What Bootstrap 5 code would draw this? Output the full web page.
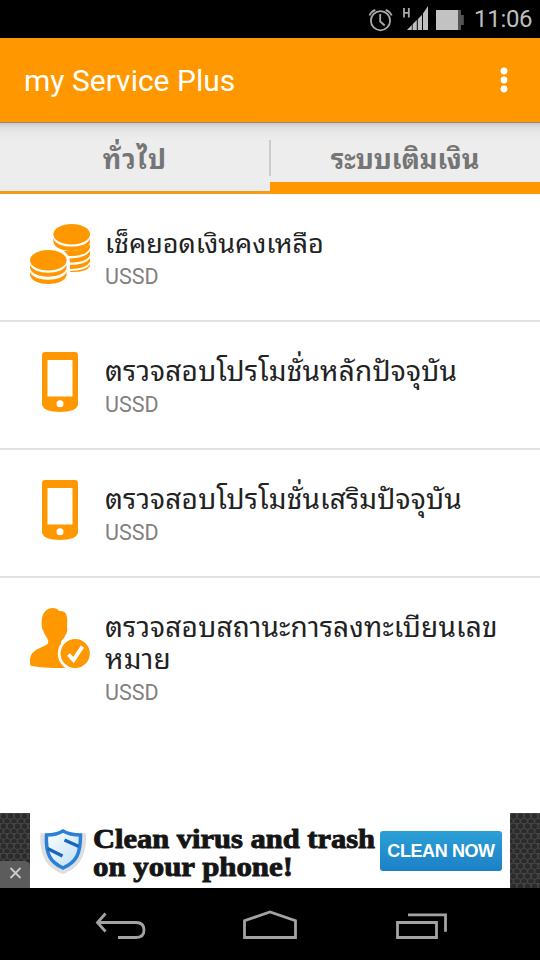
<!DOCTYPE html>
<html lang="th">
<head>
<meta charset="utf-8">
<meta name="viewport" content="width=device-width, initial-scale=1">
<title>my Service Plus</title>
<link href="https://cdn.jsdelivr.net/npm/bootstrap@5.3.0/dist/css/bootstrap.min.css" rel="stylesheet">
<style>
body{font-family:Roboto,"Droid Sans Thai","Noto Sans Thai Looped","Noto Looped Thai",Loma,Waree,Garuda,"Noto Sans Thai","Noto Sans",sans-serif;color:#222}
svg{display:block;flex:none}
.screen{width:540px;height:960px;background:#fff;overflow:hidden}
.status{height:38px;background:#000;color:#bebebe}
.clock{font-size:24px;line-height:39px;width:58px;white-space:nowrap;letter-spacing:-.3px}
.appbar{height:85px;background:#ff9800;border-bottom:1px solid #a08468;padding:0 0 0 24px}
.apptitle{font-size:30px;line-height:85px}
.tabs{height:71px;background:linear-gradient(#c9c9cb 0,#dcdedc 4px,#e6e8e6 9px,#ededed 17px)}
.tabs button{border:0;background:none;border-radius:0;color:#757575;font-weight:700;font-size:27px;line-height:36px;padding:19px 0 0;white-space:nowrap;display:flex;justify-content:center;align-items:flex-start}
.tab-off{border-bottom:3px solid #f59b1c!important}
.tab-on{border-bottom:12px solid #ff9800!important}
.tab-off span{letter-spacing:1.3px}
.tab-on span{letter-spacing:0}
.sep{width:2px;height:36px;background:#ccc;margin:17px -1px 0}
.entry{height:128px;padding:30px 30px 0;border-bottom:2px solid #e2e2e2;gap:15px}
.entry:last-child{height:235px;border:0}
.ttl{font-size:28px;line-height:32px;margin-top:4px;white-space:nowrap;color:#222;letter-spacing:.18px}
.ttl.first{font-size:27px;letter-spacing:0}
.sub{font-size:21.5px;line-height:26px;color:#808080;margin-top:4px}
.ad{height:75px;background:#303030}
.side{width:30px;height:75px}
.adbox{background:#fff;width:480px;padding-left:10px}
.adtext{width:287px;font-family:"Liberation Serif",serif}
.cta{width:122px;height:40px;background:linear-gradient(#2ba0d6,#1c80c6);border-radius:3px;color:#fff;font:700 18px/40px "Liberation Sans",sans-serif;margin:0 0 0 3px;padding:0;border:0;white-space:nowrap;letter-spacing:-.4px}
.navkeys{height:72px;background:#000}
</style>
<script src="https://cdn.jsdelivr.net/npm/bootstrap@5.3.0/dist/js/bootstrap.bundle.min.js"></script>
</head>
<body>
<svg width="0" height="0" class="position-absolute">
<symbol id="phone" viewBox="0 0 60 60"><path fill="#ff9800" fill-rule="evenodd" d="M15 0h30q3 0 3 3v49c0 5-7 8-18 8s-18-3-18-8V3q0-3 3-3ZM17.500 8v36.500h25V8ZM30 48.200a3.500 3.500 0 1 0 0 7 3.500 3.500 0 0 0 0-7Z"/></symbol>
<pattern id="mesh" width="7" height="10" patternUnits="userSpaceOnUse"><rect width="7" height="10" fill="#454545"/><path d="M3.500 .3l2.700 1.500v3L3.500 6.200.8 4.800v-3ZM0 5.400l2.700 1.500v3H-2.700v-3ZM7 5.400l2.700 1.500v3H4.300v-3Z" fill="#2b2b2b"/></pattern>
</svg>
<main class="screen d-flex flex-column">
<div class="status d-flex justify-content-end pe-2">
<svg width="106" height="38" viewBox="368 0 106 38"><g fill="none" stroke="#aaa" stroke-width="1.800"><circle cx="380.500" cy="20.700" r="9.600"/><path d="M380.200 14v7.500l4.500 4M369.500 15.500q1.500-4 5.800-5.700M385.700 9.800q4.300 1.700 6 5.700"/></g><path d="M404 8v9.500M408.800 8v9.500M404 12.800h4.800" stroke="#aaa" stroke-width="1.800"/><path fill="#bebebe" d="M407 30l4.800-5V30ZM412.600 24.300l4.200-4.300V30h-4.200ZM417.800 19.200l4.200-4.400V30h-4.200ZM423 13.500l5-7.500V30h-5Z"/><path fill="#555" d="M458 10h3v5h2.800v10H461v5h-3Z"/><path fill="#c2c2c2" d="M436 10h22v20h-22Z"/></svg>
<span class="clock">11:06</span>
</div>
<header class="appbar d-flex justify-content-between text-white">
<span class="apptitle">my Service Plus</span>
<svg width="72" height="84" viewBox="468 38 72 84"><g fill="#fff"><circle cx="504" cy="71" r="3.400"/><circle cx="504" cy="80" r="3.400"/><circle cx="504" cy="89" r="3.400"/></g></svg>
</header>
<nav class="tabs d-flex">
<button class="tab-off w-50"><span>ทั่วไป</span></button><span class="sep"></span><button class="tab-on w-50"><span>ระบบเติมเงิน</span></button>
</nav>
<section class="flex-grow-1 overflow-hidden">
<div class="entry d-flex">
<svg width="60" height="60" viewBox="0 0 60 60"><g fill="#ff9800"><ellipse cx="41.700" cy="10.200" rx="18.300" ry="10.200"/><path d="M23.400 14.500c3 11 33.600 11 36.600 0v3.500c-2 12-34.600 12-36.600 0Z"/><path d="M34 27q20 1 26-7v3.500q-3 9-21.500 8.500-1.800-2.500-4.500-5Z"/><path d="M39.500 34.500Q56 34 60 27v4q-3 7.500-20 7.500ZM40 41Q56 41 60 34v4Q56 45 40 45ZM40 47Q56 47 60 40.500V42q-3 6.500-20 6Z"/><ellipse cx="18.300" cy="36.200" rx="18.300" ry="10.200"/><path d="M0 40.500c3 11 33.600 11 36.600 0V44c-2 11.500-34.600 11.500-36.600 0ZM0 47.500c3 11 33.600 11 36.600 0V51c-2 12-34.600 12-36.600 0Z"/></g></svg>
<div><div class="ttl first">เช็คยอดเงินคงเหลือ</div><div class="sub">USSD</div></div>
</div>
<div class="entry d-flex">
<svg width="60" height="60"><use href="#phone"/></svg>
<div><div class="ttl">ตรวจสอบโปรโมชั่นหลักปัจจุบัน</div><div class="sub">USSD</div></div>
</div>
<div class="entry d-flex">
<svg width="60" height="60"><use href="#phone"/></svg>
<div><div class="ttl">ตรวจสอบโปรโมชั่นเสริมปัจจุบัน</div><div class="sub">USSD</div></div>
</div>
<div class="entry d-flex">
<svg width="60" height="60" viewBox="0 0 60 60"><path fill="#ff9800" d="M12 19C10 6 16 0 23 0q4 0 6 3c8-1 9 5 8 17 1 4-1 6-2 8-1 3-4 4-4 7 0 5 7 7 13 10v15H28c-13 0-25-1-28-3-1-11 3-14 12-18 5-2 7-3 6-7-1-3-3-4-5-10-1-1-1-2-1-3Z"/><circle cx="45.200" cy="45.500" r="16" fill="#ff9800" stroke="#fff" stroke-width="2.800"/><path d="M38.500 46.500l5 5.500 9-13.500" fill="none" stroke="#fff" stroke-width="4"/></svg>
<div><div class="ttl">ตรวจสอบสถานะการลงทะเบียนเลข<br>หมาย</div><div class="sub">USSD</div></div>
</div>
</section>
<aside class="ad d-flex">
<svg class="side" viewBox="0 0 30 75"><rect width="30" height="75" fill="url(#mesh)"/><path fill="#5c5c5c" d="M0 48h24q6 0 6 6v21H0Z"/><path d="M10.500 55l10 10M20.500 55l-10 10" stroke="#ccc" stroke-width="1.800"/></svg>
<div class="adbox d-flex align-items-center">
<svg width="50" height="75" viewBox="40 813 50 75"><defs><linearGradient id="sg" x2="1" y2="1"><stop stop-color="#fff"/><stop offset="1" stop-color="#b9def5"/></linearGradient></defs><path d="M40.500 833q13 2 22.500-4 10 6 23 4c1 23-7 35-23 41-16-6-24-18-22.500-41Z" fill="#dedede"/><path d="M46.500 835q10 0 16.500-4 7 4 17.500 4c0 19-4 27-17.500 33-13-6-17.500-14-16.500-33Z" fill="url(#sg)" stroke="#2a80d8" stroke-width="3.500"/><path d="M47.500 848.500l15 7.500M79 846.500l-14.500-6.500" fill="none" stroke="#1b65bd" stroke-width="3.500"/></svg>
<svg class="adtext" height="75" viewBox="90 813 287 75" font-weight="700" font-size="27" fill="#151515" stroke="#151515" stroke-width=".9"><text x="93" y="848" textLength="282" lengthAdjust="spacingAndGlyphs">Clean virus and trash</text><text x="93" y="875.500" textLength="200" lengthAdjust="spacingAndGlyphs">on your phone!</text></svg>
<button class="cta">CLEAN NOW</button>
</div>
<svg class="side" viewBox="0 0 30 75"><rect width="30" height="75" fill="url(#mesh)"/></svg>
</aside>
<footer class="navkeys"><svg width="540" height="72" viewBox="0 888 540 72"><g fill="none" stroke="#a3a3a3" stroke-width="2.800"><path d="M97 922.500h39q8 0 8 7.500t-8 7.500h-18M105.500 913.500l-8 9 8 9"/><path d="M244.500 937.500v-16.800l25.500-8.700 25.500 8.700v16.800ZM397.500 922.500h39v15h-39ZM408 914.800h37.500v17"/></g></svg></footer>
</main>
</body>
</html>
